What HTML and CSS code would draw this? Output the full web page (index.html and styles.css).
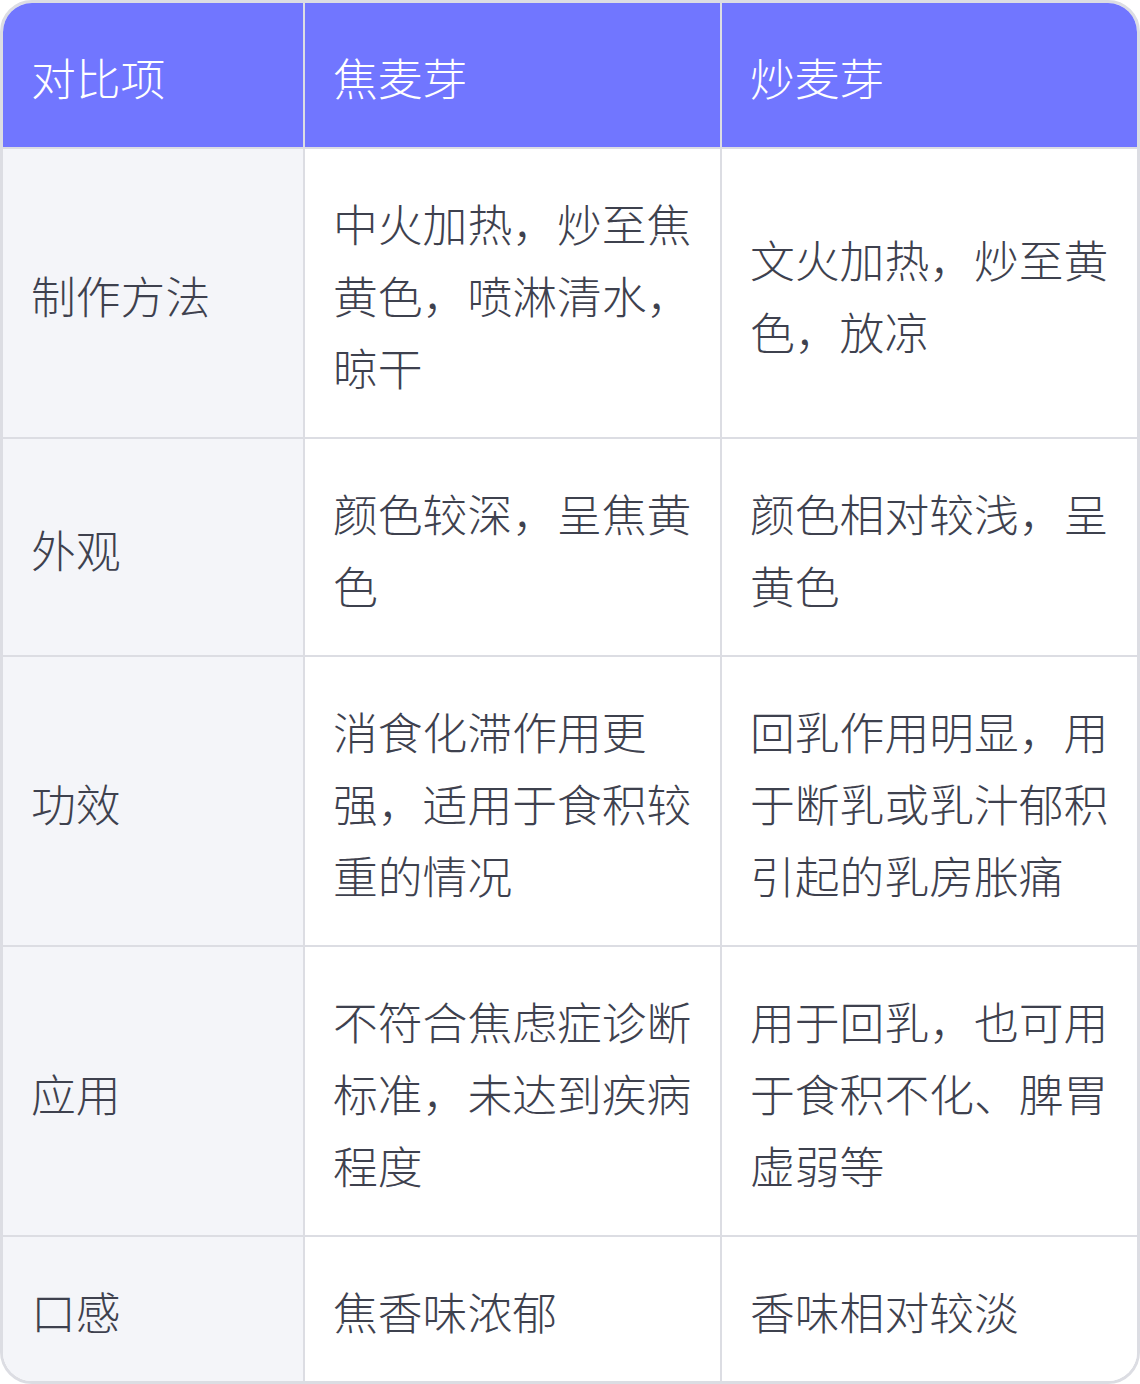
FILE: index.html
```html
<!DOCTYPE html>
<html lang="zh-CN">
<head>
<meta charset="utf-8">
<title>焦麦芽与炒麦芽对比</title>
<link rel="stylesheet" href="styles.css">
</head>
<body>
<div class="table">
  <div class="cell head">对比项</div>
  <div class="cell head">焦麦芽</div>
  <div class="cell head last-col">炒麦芽</div>

  <div class="cell label">制作方法</div>
  <div class="cell">中火加热，炒至焦黄色，喷淋清水，晾干</div>
  <div class="cell last-col">文火加热，炒至黄色，放凉</div>

  <div class="cell label">外观</div>
  <div class="cell">颜色较深，呈焦黄色</div>
  <div class="cell last-col">颜色相对较浅，呈黄色</div>

  <div class="cell label">功效</div>
  <div class="cell">消食化滞作用更强，适用于食积较重的情况</div>
  <div class="cell last-col">回乳作用明显，用于断乳或乳汁郁积引起的乳房胀痛</div>

  <div class="cell label">应用</div>
  <div class="cell">不符合焦虑症诊断标准，未达到疾病程度</div>
  <div class="cell last-col">用于回乳，也可用于食积不化、脾胃虚弱等</div>

  <div class="cell label last-row">口感</div>
  <div class="cell last-row">焦香味浓郁</div>
  <div class="cell last-row last-col">香味相对较淡</div>
</div>
</body>
</html>
```
FILE: styles.css
```css
html, body {
  margin: 0;
  padding: 0;
  background: #ffffff;
}

.table {
  box-sizing: border-box;
  width: 1140px;
  display: grid;
  grid-template-columns: 302px 417px 1fr;
  border: 3px solid #dcdde3;
  border-radius: 32px;
  overflow: hidden;
  font-family: "Noto Sans CJK SC", "Noto Sans", sans-serif;
  font-weight: 300;
  font-size: 44.8px;
  line-height: 72px;
  color: #3e414e;
}

.cell {
  box-sizing: border-box;
  display: flex;
  align-items: center;
  padding: 38px 27px 34px 28px;
  border-right: 2px solid #dcdde3;
  border-bottom: 2px solid #dcdde3;
  background: #ffffff;
}

.head {
  background: #7176ff;
  color: #ffffff;
}

.label {
  background: #f4f5f9;
}

.last-col {
  border-right: none;
}

.last-row {
  border-bottom: none;
}
```
